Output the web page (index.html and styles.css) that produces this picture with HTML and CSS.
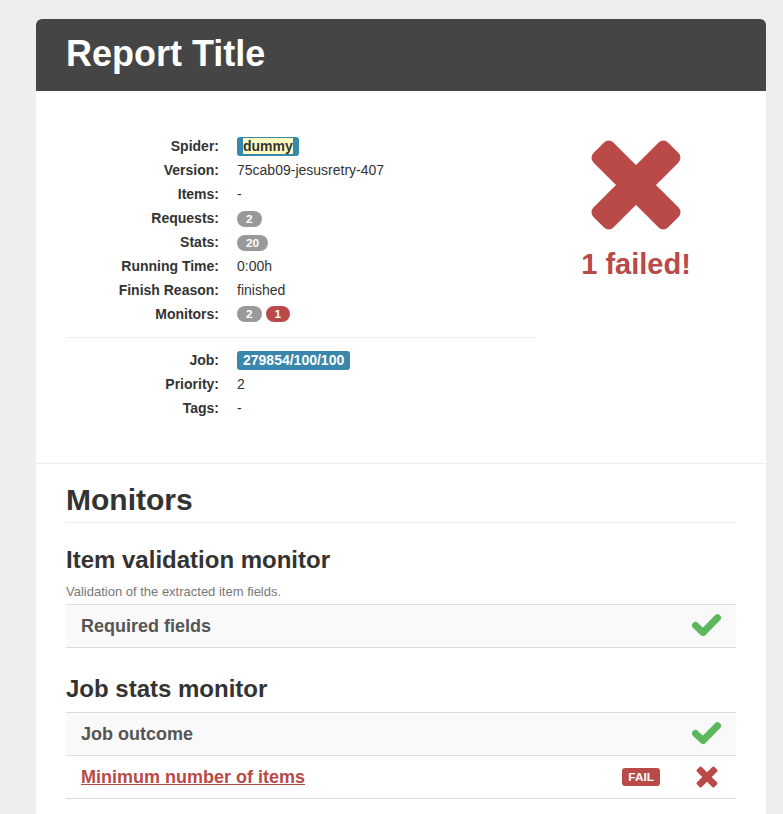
FILE: index.html
```html
<!DOCTYPE html>
<html>
<head>
<meta charset="utf-8">
<title>Report Title</title>
<link rel="stylesheet" href="styles.css">
</head>
<body>
<div class="report">
  <header class="report-header">
    <h1>Report Title</h1>
  </header>

  <section class="summary">
    <div class="info">
      <dl class="info-list">
        <dt>Spider:</dt><dd><span class="label label-info"><mark>dummy</mark></span></dd>
        <dt>Version:</dt><dd>75cab09-jesusretry-407</dd>
        <dt>Items:</dt><dd>-</dd>
        <dt>Requests:</dt><dd><span class="badge">2</span></dd>
        <dt>Stats:</dt><dd><span class="badge">20</span></dd>
        <dt>Running Time:</dt><dd>0:00h</dd>
        <dt>Finish Reason:</dt><dd>finished</dd>
        <dt>Monitors:</dt><dd class="badges"><span class="badge">2</span><span class="badge badge-important">1</span></dd>
      </dl>
      <hr class="divider">
      <dl class="info-list">
        <dt>Job:</dt><dd><span class="label label-info">279854/100/100</span></dd>
        <dt>Priority:</dt><dd>2</dd>
        <dt>Tags:</dt><dd>-</dd>
      </dl>
    </div>
    <div class="status">
      <svg class="status-icon" viewBox="0 0 100 100" width="94" height="94" aria-hidden="true">
        <rect x="-6" y="35" width="112" height="30" rx="7" transform="rotate(45 50 50)"/>
        <rect x="-6" y="35" width="112" height="30" rx="7" transform="rotate(-45 50 50)"/>
      </svg>
      <div class="status-text">1 failed!</div>
    </div>
  </section>

  <section class="monitors">
    <h2>Monitors</h2>

    <div class="monitor">
      <h3>Item validation monitor</h3>
      <p class="desc">Validation of the extracted item fields.</p>
      <div class="tests">
        <div class="test test-passed">
          <span class="test-name">Required fields</span>
          <span class="test-icon">
            <svg viewBox="0 0 30 24" width="30" height="24" aria-hidden="true"><polyline class="check" points="3.5,11.5 11,18.5 25.5,3.8"/></svg>
          </span>
        </div>
      </div>
    </div>

    <div class="monitor">
      <h3>Job stats monitor</h3>
      <div class="tests">
        <div class="test test-passed">
          <span class="test-name">Job outcome</span>
          <span class="test-icon">
            <svg viewBox="0 0 30 24" width="30" height="24" aria-hidden="true"><polyline class="check" points="3.5,11.5 11,18.5 25.5,3.8"/></svg>
          </span>
        </div>
        <div class="test test-failed">
          <a class="test-name test-link" href="#">Minimum number of items</a>
          <span class="label label-important">FAIL</span>
          <span class="test-icon">
            <svg class="cross" viewBox="0 0 100 100" width="22" height="22" aria-hidden="true">
              <rect x="-6" y="35" width="112" height="30" rx="7" transform="rotate(45 50 50)"/>
              <rect x="-6" y="35" width="112" height="30" rx="7" transform="rotate(-45 50 50)"/>
            </svg>
          </span>
        </div>
      </div>
    </div>
  </section>
</div>
</body>
</html>
```

FILE: styles.css
```css
html, body {
  margin: 0;
  padding: 0;
}

body {
  background: #eeeeee;
  font-family: "Liberation Sans", Arial, Helvetica, sans-serif;
  font-size: 14px;
  line-height: 20px;
  color: #333333;
  padding-top: 19px;
}

.report {
  width: 730px;
  margin-left: 36px;
  background: #ffffff;
  border-radius: 6px 6px 0 0;
  min-height: 800px;
}

.report-header {
  background: #454545;
  border-radius: 6px 6px 0 0;
  padding: 15px 30px 17px;
}

.report-header h1 {
  margin: 0;
  font-size: 36px;
  line-height: 40px;
  font-weight: bold;
  color: #ffffff;
}

/* Summary */
.summary {
  display: flex;
  padding: 43px 30px;
  border-bottom: 1px solid #eeeeee;
}

.info {
  width: 470px;
}

.info-list {
  display: grid;
  grid-template-columns: 153px 1fr;
  column-gap: 18px;
  grid-auto-rows: 24px;
  align-items: center;
  margin: 0;
}

.info-list dt {
  font-weight: bold;
  text-align: right;
}

.info-list dd {
  margin: 0;
}

.badges {
  display: flex;
  gap: 4px;
  align-items: center;
}

.divider {
  border: 0;
  border-top: 1px solid #eeeeee;
  margin: 11px 0 10px;
  height: 0;
}

.status {
  flex: 1;
  display: flex;
  flex-direction: column;
  align-items: center;
  padding-top: 4px;
}

.status-icon {
  display: block;
  fill: #b94a48;
}

.status-text {
  margin-top: 12px;
  font-size: 29px;
  line-height: 40px;
  font-weight: bold;
  color: #b94a48;
}

/* Labels & badges */
.label {
  display: inline-block;
  padding: 2px 6px;
  font-size: 14px;
  line-height: 15px;
  font-weight: bold;
  color: #ffffff;
  border-radius: 3px;
  vertical-align: middle;
}

.label-info {
  background: #3a87ad;
}

.label-info mark {
  background: #fdfbc0;
  color: #333333;
}

.label-important {
  background: #b94a48;
  font-size: 11.844px;
  line-height: 14px;
  padding: 2px 6px;
}

.badge {
  display: inline-block;
  padding: 1px 9px;
  font-size: 11.844px;
  line-height: 14px;
  font-weight: bold;
  color: #ffffff;
  background: #999999;
  border-radius: 9px;
  vertical-align: middle;
}

.badge-important {
  background: #b94a48;
}

/* Monitors */
.monitors {
  padding: 16px 30px 0;
}

.monitors h2 {
  margin: 0 0 22px;
  font-size: 30px;
  line-height: 40px;
  font-weight: bold;
  padding-bottom: 2px;
  border-bottom: 1px solid #eeeeee;
}

.monitor + .monitor {
  margin-top: 26px;
}

.monitor h3 {
  margin: 0 0 8px;
  font-size: 24px;
  line-height: 30px;
  font-weight: bold;
}

.desc {
  margin: 0 0 4px;
  font-size: 13px;
  line-height: 17px;
  color: #777777;
}

.tests {
  border-bottom: 1px solid #dddddd;
}

.test {
  display: flex;
  align-items: center;
  height: 42px;
  border-top: 1px solid #dddddd;
  padding: 0 14px 0 15px;
}

.test-passed {
  background: #f9f9f9;
}

.test-name {
  flex: 1;
  font-size: 18px;
  line-height: 20px;
  font-weight: bold;
  color: #555555;
}

.test-link {
  color: #b94a48;
  text-decoration: underline;
}

.test-failed .label-important {
  margin-right: 32px;
}

.test-icon {
  width: 30px;
  display: flex;
  justify-content: center;
  align-items: center;
}

.test-icon svg {
  display: block;
}

.check {
  fill: none;
  stroke: #5cb85c;
  stroke-width: 7;
  stroke-linecap: round;
  stroke-linejoin: round;
}

.cross {
  fill: #b94a48;
}
```
